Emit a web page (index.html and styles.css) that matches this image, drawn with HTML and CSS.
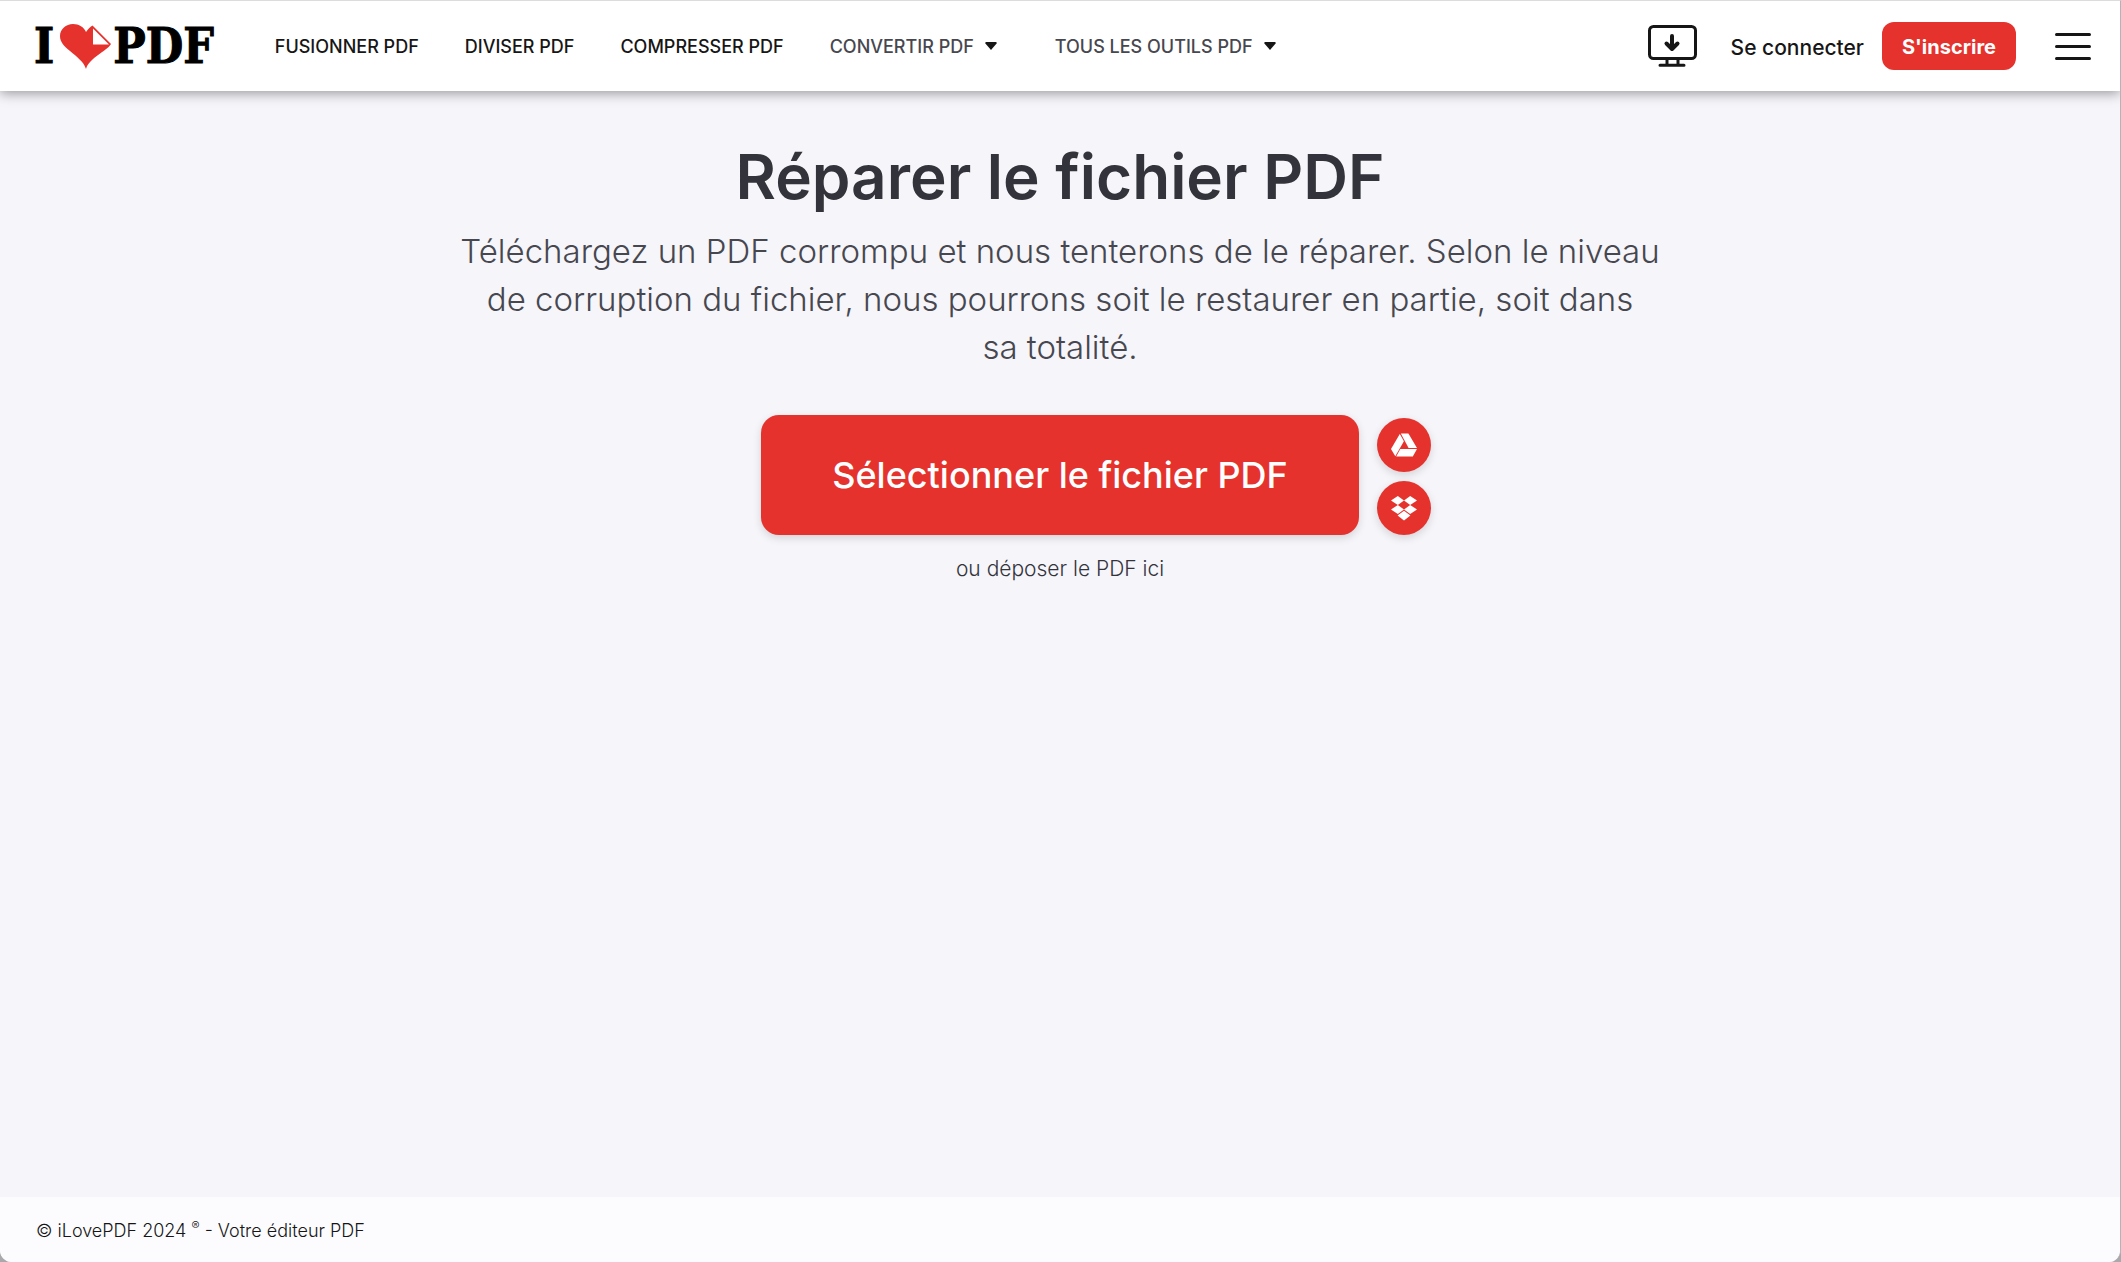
FILE: index.html
```html
<!DOCTYPE html>
<html lang="fr">
<head>
    <meta charset="UTF-8">
    <meta name="viewport" content="width=device-width, initial-scale=1.0">
    <title>Réparer le fichier PDF</title>
    <link rel="stylesheet" href="styles.css">
</head>
<body>
    <div class="page">
        <header class="header">
            <a class="logo" href="#" aria-label="I love PDF">
                <span>I</span>
                <svg class="logo-heart" viewBox="0 0 51 45" width="51" height="45" aria-hidden="true">
                    <path fill="#e5322d" d="M26 45C24 38 17 33 10 27C4 22 0 18 0 12C0 5 6 0 13 0C19 0 24 3 26 8C28 5 30 3 32.500 1.500L51 20C47 27 29 34 26 45Z"/>
                    <path fill="#fff" d="M33 4.500V20.500H49Z"/>
                </svg>
                <span>PDF</span>
            </a>
            <nav class="nav">
                <a href="#">Fusionner PDF</a>
                <a href="#">Diviser PDF</a>
                <a href="#">Compresser PDF</a>
                <button class="nav-menu" type="button">Convertir PDF
                    <svg viewBox="0 0 12 8" width="12" height="8" aria-hidden="true"><path d="M1 0H11L12 1L6 8L0 1Z"/></svg>
                </button>
                <button class="nav-menu" type="button">Tous les outils PDF
                    <svg viewBox="0 0 12 8" width="12" height="8" aria-hidden="true"><path d="M1 0H11L12 1L6 8L0 1Z"/></svg>
                </button>
            </nav>
            <div class="actions">
                <a class="desktop" href="#" aria-label="Version bureau">
                    <svg viewBox="0 0 49 42" width="49" height="42" fill="none" stroke="#161616" stroke-width="3" stroke-linecap="round" stroke-linejoin="round">
                        <rect x="1.5" y="1.5" width="46" height="32" rx="4"/>
                        <path d="M19 34V40M30 34V40M12 40.2H36"/>
                        <path stroke-width="4" d="M24 11V23M18.5 18.5L24 24L29.5 18.5"/>
                    </svg>
                </a>
                <a class="login" href="#">Se connecter</a>
                <a class="signup" href="#">S'inscrire</a>
                <button class="burger" type="button" aria-label="Menu">
                    <svg viewBox="0 0 36 27" width="36" height="27" stroke="#161616" stroke-width="3" stroke-linecap="round">
                        <path d="M1.5 1.5H34.5M1.5 13.5H34.5M1.5 25.5H34.5"/>
                    </svg>
                </button>
            </div>
        </header>

        <main class="tool">
            <h1>Réparer le fichier PDF</h1>
            <p class="subtitle">Téléchargez un PDF corrompu et nous tenterons de le réparer. Selon le niveau de corruption du fichier, nous pourrons soit le restaurer en partie, soit dans sa&nbsp;totalité.</p>
            <div class="uploader">
                <button class="select-file" type="button">Sélectionner le fichier PDF</button>
                <div class="sources">
                    <button class="source" type="button" aria-label="Google Drive">
                        <svg viewBox="0 0 26 24" width="26" height="24" fill="#fff">
                            <path d="M8.8 1L0 16L4.3 23.3L12.9 8.2Z"/>
                            <path d="M9.8 .5H17.4L26 15H17.6Z"/>
                            <path d="M9.3 16H26L21.8 23.5H5.2Z"/>
                        </svg>
                    </button>
                    <button class="source" type="button" aria-label="Dropbox">
                        <svg viewBox="0 0 26 25" width="26" height="25" fill="#fff">
                            <path d="M6.8 0L13 4.5L6.8 9L0 4.5Z"/>
                            <path d="M19.2 0L26 4.5L19.2 9L13 4.5Z"/>
                            <path d="M6.8 9L13 13.5L6.8 18L0 13.5Z"/>
                            <path d="M19.2 9L26 13.5L19.2 18L13 13.5Z"/>
                            <path d="M13 14.8L19.4 19.5L13 24.5L6.6 19.5Z"/>
                        </svg>
                    </button>
                </div>
            </div>
            <p class="drop-hint">ou déposer le PDF ici</p>
        </main>

        <footer class="footer">© iLovePDF 2024 <sup>®</sup> - Votre éditeur PDF</footer>
    </div>
</body>
</html>
```

FILE: styles.css
```css
* {
    box-sizing: border-box;
}

body {
    margin: 0;
    background: #a9a9ab;
    font-family: Inter, "Liberation Sans", sans-serif;
    color: #161616;
}

a {
    color: inherit;
    text-decoration: none;
}

button {
    padding: 0;
    border: none;
    background: none;
    color: inherit;
    font: inherit;
    cursor: pointer;
}

svg {
    display: block;
}

.page {
    display: flex;
    flex-direction: column;
    min-height: 100vh;
    border-top: 1px solid #dcdcde;
    border-right: 1px solid #b4b4b6;
    border-radius: 0 0 12px 12px;
    background: #f5f5fa;
    overflow: hidden;
}

/* Header */
.header {
    display: flex;
    align-items: center;
    height: 90px;
    padding: 0 29px 0 34px;
    background: #fff;
    box-shadow: 0 2px 12px rgba(0, 0, 0, 0.4);
}

.logo {
    display: flex;
    align-items: center;
    margin-right: 61px;
    font-family: "DejaVu Serif Condensed", "DejaVu Serif", serif;
    font-size: 48px;
    font-weight: bold;
    line-height: 1;
    color: #000;
    -webkit-text-stroke: 1px #000;
}

.logo-heart {
    margin: 0 2px 0 6px;
}

.nav {
    display: flex;
    align-items: center;
    gap: 46px;
    font-size: 18px;
    font-weight: 500;
    text-transform: uppercase;
    white-space: nowrap;
}

.nav-menu {
    display: flex;
    align-items: center;
    gap: 11px;
    margin-right: 12px;
    color: #47474f;
    text-transform: uppercase;
}

.nav-menu svg {
    fill: #161616;
}

.actions {
    display: flex;
    align-items: center;
    margin-left: auto;
    font-size: 21px;
    white-space: nowrap;
}

.desktop {
    margin-right: 34px;
}

.login {
    margin-right: 18px;
    padding-top: 2px;
    font-weight: 500;
}

.signup {
    margin-right: 39px;
    padding: 2px 20px 0;
    border-radius: 12px;
    background: #e5322d;
    color: #fff;
    font-size: 20px;
    font-weight: 700;
    line-height: 46px;
}

/* Tool */
.tool {
    flex: 1;
    padding: 48px 36px;
    text-align: center;
}

h1 {
    margin: 0;
    font-size: 62px;
    font-weight: 600;
    line-height: 76px;
    color: #33333b;
}

.subtitle {
    max-width: 1200px;
    margin: 12px auto 0;
    font-size: 33px;
    font-weight: 300;
    line-height: 48px;
    color: #47474f;
}

.uploader {
    display: grid;
    grid-template-columns: 1fr auto 1fr;
    align-items: end;
    column-gap: 18px;
    margin-top: 44px;
}

.select-file {
    grid-column: 2;
    height: 120px;
    padding: 0 71px;
    border-radius: 18px;
    background: #e5322d;
    box-shadow: 0 3px 9px rgba(0, 0, 0, 0.14);
    color: #fff;
    font-size: 36px;
    font-weight: 500;
}

.sources {
    display: grid;
    gap: 9px;
    justify-content: start;
}

.source {
    display: grid;
    place-items: center;
    width: 54px;
    height: 54px;
    border-radius: 50%;
    background: #e5322d;
    box-shadow: 0 3px 9px rgba(0, 0, 0, 0.14);
}

.drop-hint {
    margin: 18px 0 0;
    font-size: 21px;
    font-weight: 300;
    line-height: 32px;
    color: #33333b;
}

/* Footer */
.footer {
    padding: 3px 36px 0;
    background: #fcfcff;
    font-size: 18px;
    font-weight: 300;
    line-height: 62px;
}

.footer sup {
    font-size: 12px;
    line-height: 0;
}
```
